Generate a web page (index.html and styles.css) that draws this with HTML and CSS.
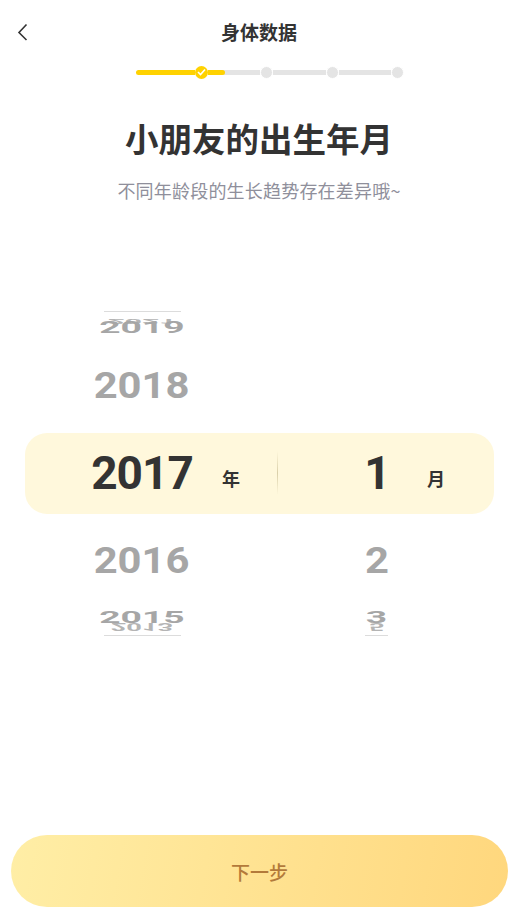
FILE: index.html
```html
<!DOCTYPE html>
<html lang="zh">
  <head>
    <meta charset="UTF-8" />
    <title>身体数据</title>
    <link rel="stylesheet" href="styles.css">
  </head>
  <body>
    <header class="topBar">
      <svg class="backIcon" width="12" height="18" viewBox="0 0 12 18">
        <path d="M9.5 1.5 L2 9.5 L9.5 17" fill="none" stroke="#333" stroke-width="1.6" />
      </svg>
      <div class="topTitle">身体数据</div>
    </header>

    <div class="steps">
      <span class="seg segDone segFirst"></span>
      <span class="dot dotDone">
        <svg width="9" height="8" viewBox="0 0 9 8">
          <path d="M1 4 L3.5 6.5 L8 1.5" fill="none" stroke="#fff" stroke-width="1.6" />
        </svg>
      </span>
      <span class="seg"><span class="segFill"></span></span>
      <span class="dot"></span>
      <span class="seg"></span>
      <span class="dot"></span>
      <span class="seg"></span>
      <span class="dot"></span>
    </div>

    <h1 class="heading">小朋友的出生年月</h1>
    <p class="subHeading">不同年龄段的生长趋势存在差异哦~</p>

    <div class="picker">
      <div class="row rowEdge">
        <div class="cell"><span class="edgeLine"></span></div>
        <div class="cell"></div>
      </div>
      <div class="row rowFar">
        <div class="cell">
          <span class="num numBack numBackTop">2021</span>
          <span class="num numFar">2019</span>
        </div>
        <div class="cell"></div>
      </div>
      <div class="row rowNear rowNearTop">
        <div class="cell"><span class="num numNear">2018</span></div>
        <div class="cell"></div>
      </div>

      <div class="band">
        <div class="bandCol">
          <span class="num numActive">2017</span>
          <span class="unit unitYear">年</span>
        </div>
        <div class="bandCol">
          <span class="num numActive">1</span>
          <span class="unit unitMonth">月</span>
        </div>
      </div>

      <div class="row rowNear rowNearBottom">
        <div class="cell"><span class="num numNear">2016</span></div>
        <div class="cell"><span class="num numNear">2</span></div>
      </div>
      <div class="row rowFar rowFarBottom">
        <div class="cell">
          <span class="num numBack numBackBottom">2013</span>
          <span class="num numFar">2015</span>
        </div>
        <div class="cell">
          <span class="num numBack numBackBottom">5</span>
          <span class="num numFar">3</span>
        </div>
      </div>
      <div class="row rowEdge">
        <div class="cell"><span class="edgeLine"></span></div>
        <div class="cell"><span class="edgeLine edgeLineShort"></span></div>
      </div>
    </div>

    <button class="nextBtn">下一步</button>
  </body>
</html>
```

FILE: styles.css
```css
* {
  margin: 0;
  padding: 0;
  box-sizing: border-box;
}
body {
  height: 914px;
  overflow: hidden;
  background-color: #fff;
  color: #333;
  font-family: "Noto Sans CJK SC", sans-serif;
  display: flex;
  flex-direction: column;
}
.topBar {
  height: 62px;
  display: flex;
  align-items: center;
  justify-content: center;
  position: relative;
}
.backIcon {
  position: absolute;
  left: 17px;
  top: 23px;
}
.topTitle {
  font-size: 19px;
  font-weight: 700;
}
.steps {
  height: 20px;
  padding-left: 136px;
  display: flex;
  align-items: center;
}
.seg {
  width: 52.33px;
  height: 5px;
  background-color: #e4e4e4;
}
.segFirst {
  width: 59px;
  border-radius: 3px 0 0 3px;
}
.segDone,
.segFill,
.dotDone {
  background-color: #ffd200;
}
.segFill {
  display: block;
  width: 17px;
  height: 5px;
  border-radius: 0 3px 3px 0;
}
.dot {
  width: 13px;
  height: 13px;
  border: 1px solid #fff;
  border-radius: 50%;
  background-color: #e4e4e4;
  display: flex;
  align-items: center;
  justify-content: center;
}
.dotDone {
  background-color: #ffd200;
  border: 0;
}
.heading {
  margin-top: 32px;
  text-align: center;
  font-size: 33.5px;
  line-height: 48px;
  font-weight: 700;
}
.subHeading {
  margin-top: 16px;
  text-align: center;
  font-size: 18px;
  letter-spacing: 0.2px;
  line-height: 24px;
  color: #8f8f9b;
}
.picker {
  margin-top: 104px;
  padding: 0 24px 0 25px;
  display: flex;
  flex-direction: column;
}
.row {
  display: grid;
  grid-template-columns: 234px 235px;
}
.cell {
  display: grid;
  justify-items: center;
  align-items: center;
}
.num {
  grid-area: 1 / 1;
  font-family: Roboto, sans-serif;
  font-weight: 700;
  white-space: nowrap;
}
.rowEdge {
  height: 10px;
}
.edgeLine {
  width: 77px;
  height: 1px;
  background-color: #dcdcdc;
}
.edgeLineShort {
  width: 23px;
}
.rowFar {
  height: 24px;
}
.rowFarBottom {
  margin-top: 17px;
}
.rowNear {
  height: 56px;
}
.rowNearTop {
  margin-top: 18px;
  margin-bottom: 19px;
}
.rowNearBottom {
  margin-top: 19px;
}
.numFar {
  font-size: 40px;
  line-height: 24px;
  color: #a6a6a6;
  transform: scale(0.93, 0.42);
}
.numBack {
  font-size: 40px;
  line-height: 24px;
  color: #b4b4b4;
}
.numBackTop {
  transform: scale(0.75, -0.2) translateY(30px);
}
.numBackBottom {
  transform: scale(0.68, -0.25) translateY(-32px);
}
.numNear {
  font-size: 38px;
  line-height: 56px;
  color: #a6a6a6;
  transform: scale(1.1, 0.95);
}
.band {
  height: 81px;
  border-radius: 22px;
  background-color: #fff8dc;
  display: grid;
  grid-template-columns: 252px 1fr;
  position: relative;
}
.band::after {
  content: "";
  position: absolute;
  left: 252px;
  top: 18px;
  width: 1px;
  height: 44px;
  background: linear-gradient(to bottom, #fff8dc, #d9cfa9 50%, #fff8dc);
}
.bandCol {
  display: flex;
  align-items: center;
  position: relative;
}
.numActive {
  text-align: center;
  font-size: 46px;
  letter-spacing: -1px;
  line-height: 81px;
}
.bandCol:first-child .numActive {
  width: 234px;
}
.bandCol:last-child .numActive {
  width: 200px;
}
.unit {
  position: absolute;
  font-size: 18px;
  font-weight: 700;
  top: 32px;
}
.unitYear {
  left: 197px;
}
.unitMonth {
  left: 150px;
}
.nextBtn {
  margin: auto 10px 7px 11px;
  height: 72px;
  border: 0;
  border-radius: 36px;
  background: linear-gradient(100deg, #ffeea6, #ffd77d);
  color: #b37a3a;
  font-family: "Noto Sans CJK SC", sans-serif;
  font-size: 19px;
  font-weight: 500;
}
```
